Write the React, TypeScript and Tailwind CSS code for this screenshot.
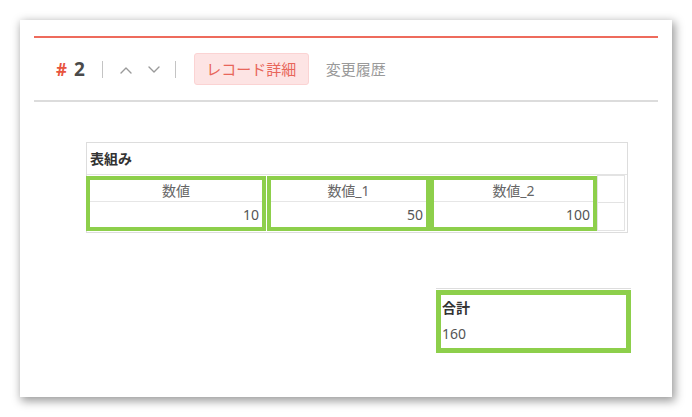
import React from 'react';

const green = 'border-[#8dcf4b]';

const Chevron: React.FC<{ up?: boolean }> = ({ up }) => (
  <svg width="12" height="8" viewBox="0 0 12 8" fill="none" stroke="#9a9a9a" strokeWidth="1.4" strokeLinecap="round" strokeLinejoin="round">
    {up ? <polyline points="1,7 6,2 11,7" /> : <polyline points="1,1 6,6 11,1" />}
  </svg>
);

const columns = [
  { label: '数値', value: '10', width: 'w-[180px]', gap: '' },
  { label: '数値_1', value: '50', width: 'w-[163px]', gap: 'ml-px' },
  { label: '数値_2', value: '100', width: 'w-[167px]', gap: '' },
];

const App: React.FC = () => {
  return (
    <div className="w-[692px] h-[417px] bg-white p-[20px] font-['Noto_Sans','Noto_Sans_CJK_JP',sans-serif]">
      <div className="w-[652px] h-[377px] bg-white shadow-[2px_3px_9px_1px_rgba(0,0,0,0.4)] px-[14px] pt-[16px]">
        {/* record header */}
        <div className="h-[2px] bg-[#ee6b5c]" />
        <div className="flex items-center h-[62px] pl-[22px]">
          <span className="text-[17px] font-bold text-[#e8553f] leading-none">#</span>
          <span className="ml-[7px] text-[19px] font-bold text-[#4a4a4a] leading-none">2</span>
          <div className="ml-[17px] w-px h-[17px] bg-[#c4c4c4]" />
          <div className="ml-[17px] mt-[2px]"><Chevron up /></div>
          <div className="ml-[16px] mt-[2px]"><Chevron /></div>
          <div className="ml-[15px] w-px h-[17px] bg-[#c4c4c4]" />
          <div className="ml-[18px] h-[32px] w-[115px] rounded-[3px] bg-[#fde4e4] border border-[#fbd3d3] flex items-center justify-center text-[15px] text-[#e8665a]">
            レコード詳細
          </div>
          <span className="ml-[17px] text-[15px] text-[#9a9a9a]">変更履歴</span>
        </div>
        <div className="h-[2px] bg-[#dcdcdc]" />

        {/* table */}
        <div className="ml-[52px] mt-[40px] w-[542px] h-[91px] border border-[#dddddd]">
          <div className="h-[32px] border-b border-[#e3e3e3] pl-[3px] flex items-center text-[14px] font-bold text-[#333333]">
            表組み
          </div>
          <div className="flex -ml-px">
            {columns.map(c => (
              <div key={c.label} className={`${c.width} ${c.gap} mt-px h-[55px] border-4 ${green} flex flex-col`}>
                <div className="h-[22px] border-b border-[#e6e6e6] flex items-center justify-center text-[14px] text-[#666666]">
                  {c.label}
                </div>
                <div className="flex-1 flex items-center justify-end pr-[3px] text-[14px] text-[#555555]">
                  {c.value}
                </div>
              </div>
            ))}
            <div className="w-[28px] h-[56px] border border-[#e3e3e3] flex flex-col">
              <div className="h-[27px] border-b border-[#e3e3e3]" />
            </div>
          </div>
        </div>

        {/* total */}
        <div className="ml-[402px] mt-[55px] w-[195px] border-t border-[#dddddd] pt-px">
          <div className={`h-[63px] border-[5px] ${green} pl-px flex flex-col`}>
            <div className="h-[25px] flex items-center text-[14px] font-bold text-[#333333]">合計</div>
            <div className="h-[26px] flex items-center text-[14px] text-[#555555]">160</div>
          </div>
        </div>
      </div>
    </div>
  );
};

export default App;
